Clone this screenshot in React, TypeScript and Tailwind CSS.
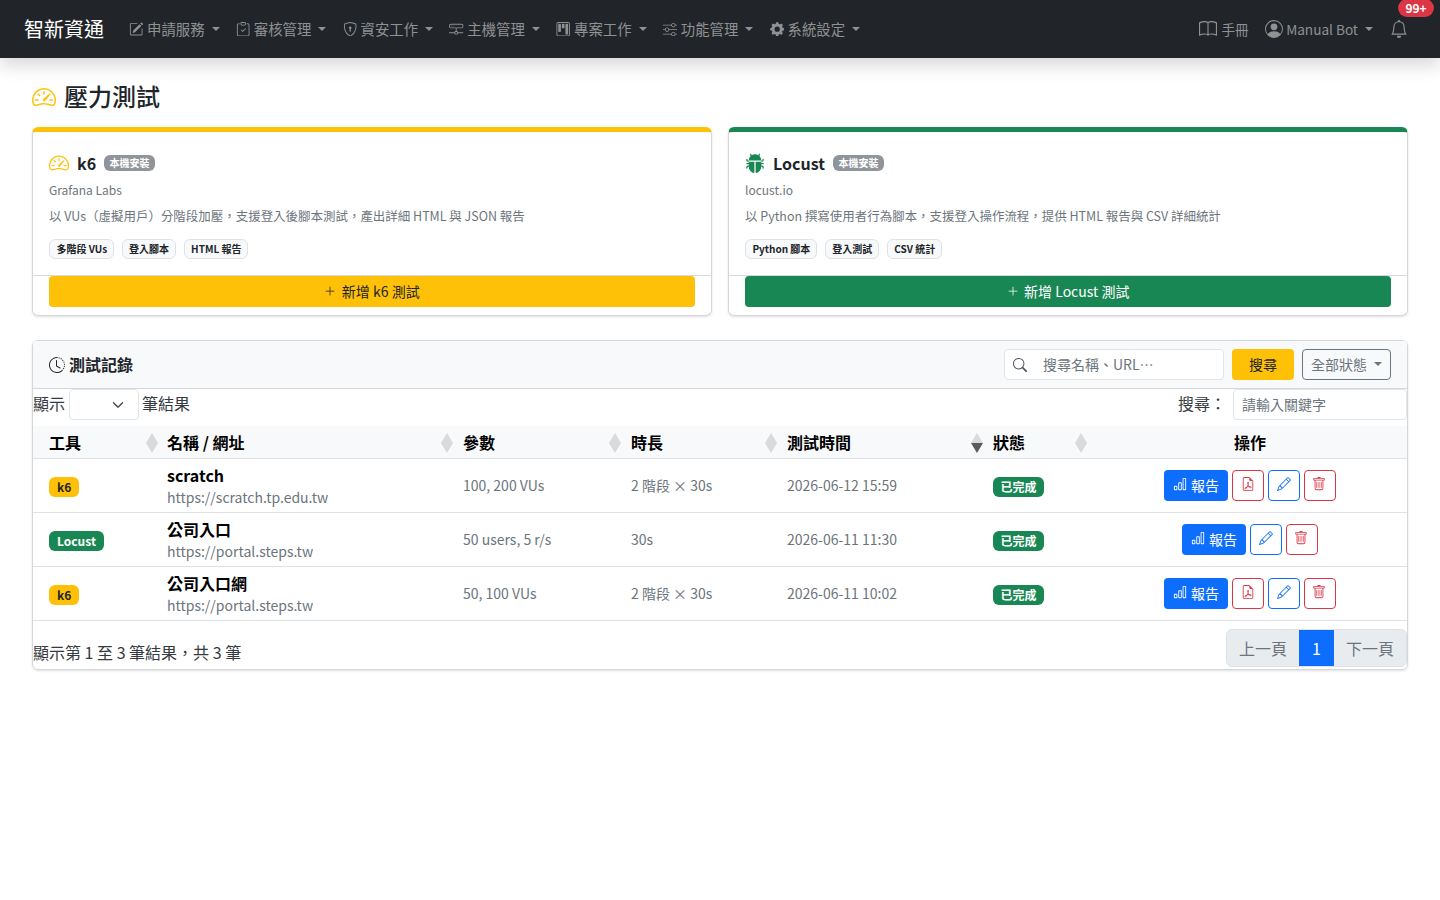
import type { ReactNode } from "react";
import {
  BsBarChart,
  BsBell,
  BsBook,
  BsBugFill,
  BsChevronDown,
  BsClipboardCheck,
  BsClockHistory,
  BsFileEarmarkPdf,
  BsGearFill,
  BsHddNetwork,
  BsKanban,
  BsPencil,
  BsPencilSquare,
  BsPersonCircle,
  BsPlusLg,
  BsSearch,
  BsShieldLock,
  BsSliders,
  BsSpeedometer2,
  BsTrash,
} from "react-icons/bs";

const navItems = [
  { label: "申請服務", icon: BsPencilSquare },
  { label: "審核管理", icon: BsClipboardCheck },
  { label: "資安工作", icon: BsShieldLock },
  { label: "主機管理", icon: BsHddNetwork },
  { label: "專案工作", icon: BsKanban },
  { label: "功能管理", icon: BsSliders },
  { label: "系統設定", icon: BsGearFill },
];

const rows = [
  { tool: "k6", name: "scratch", url: "https://scratch.tp.edu.tw", params: "100, 200 VUs", time: "2 階段 × 30s", date: "2026-06-12 15:59", pdf: true },
  { tool: "Locust", name: "公司入口", url: "https://portal.steps.tw", params: "50 users, 5 r/s", time: "30s", date: "2026-06-11 11:30", pdf: false },
  { tool: "k6", name: "公司入口網", url: "https://portal.steps.tw", params: "50, 100 VUs", time: "2 階段 × 30s", date: "2026-06-11 10:02", pdf: true },
];

function Caret() {
  return <span className="ml-[7px] inline-block h-0 w-0 border-x-[4px] border-t-[4px] border-x-transparent border-t-current" />;
}

function SortMark({ active, className = "right-[-6px]" }: { active?: boolean; className?: string }) {
  return (
    <svg viewBox="0 0 12 20" className={`absolute top-[7px] h-5 w-3 ${className}`}>
      <path d="M6 0 L12 10 H0 Z" fill="#dadada" />
      <path d="M0 10 H12 L6 20 Z" fill={active ? "#555b61" : "#dadada"} />
    </svg>
  );
}

function Tag({ children }: { children: ReactNode }) {
  return (
    <span className="rounded-md border border-[#dee2e6] bg-[#f8f9fa] py-[2px] pr-[5.6px] pl-[6.4px] text-[10px] leading-[14px] font-bold text-[#212529]">
      {children}
    </span>
  );
}

function ToolCard(props: {
  accent: string;
  icon: ReactNode;
  title: string;
  vendor: string;
  desc: string;
  tags: string[];
  button: string;
  buttonClass: string;
}) {
  return (
    <div className={`h-[189px] overflow-hidden rounded-md border border-[#d5d7d9] border-t-[5px] shadow-sm ${props.accent}`}>
      <div className="h-[143px] px-4 pt-[18px]">
        <div className="flex h-[26px] items-center">
          {props.icon}
          <span className="ml-2 text-base leading-[26px] font-semibold text-[#212529]">{props.title}</span>
          <span className="ml-2 rounded-md bg-[#8f959b] px-[5.5px] text-[10px] leading-[16px] font-bold text-white">本機安裝</span>
        </div>
        <p className="mt-[5px] text-xs leading-[18px] text-[#6c757d]">{props.vendor}</p>
        <p className="mt-[7px] text-[12.48px] leading-[20px] text-[#6c757d]">{props.desc}</p>
        <div className="mt-[13px] flex gap-2">
          {props.tags.map((t) => (
            <Tag key={t}>{t}</Tag>
          ))}
        </div>
      </div>
      <div className="border-t border-[#d9dadb] px-4">
        <button className={`flex h-[31px] w-full items-center justify-center gap-[5.5px] rounded pb-[2px] text-sm ${props.buttonClass}`}>
          <BsPlusLg className="h-3 w-3" />
          {props.button}
        </button>
      </div>
    </div>
  );
}

function IconButton({ tone, children }: { tone: "red" | "blue"; children: ReactNode }) {
  const cls = tone === "red" ? "border-[#dc3545] text-[#dc3545]" : "border-[#0d6efd] text-[#0d6efd]";
  return <button className={`flex h-[31px] w-[32px] items-center justify-center rounded border bg-white pb-[2px] text-sm ${cls}`}>{children}</button>;
}

export default function App() {
  return (
    <div lang="zh-Hant" className="min-h-[900px] bg-white text-[#212529] [font-family:'Noto_Sans_CJK_TC','Noto_Sans',sans-serif]">
      <nav className="flex h-[58px] items-center bg-[#212529] pl-6 pr-8 shadow-[0_8px_16px_rgba(0,0,0,0.15)]">
        <span className="mr-[17px] text-xl text-white">智新資通</span>
        <div className="flex text-[14.4px] text-[#8f9193]">
          {navItems.map((item) => {
            const Icon = item.icon;
            return (
              <div key={item.label} className="flex items-center pr-[8.2px] pl-2">
                <Icon className="mr-[3.6px] h-[14.4px] w-[14.4px]" />
                <span>{item.label}</span>
                <Caret />
              </div>
            );
          })}
        </div>
        <div className="ml-auto flex items-center text-[#8f9193]">
          <BsBook className="h-[18px] w-[18px]" />
          <span className="ml-1 text-[13.6px]">手冊</span>
          <BsPersonCircle className="ml-4 h-[18px] w-[18px]" />
          <span className="ml-[3.5px] text-[13.6px]">Manual Bot</span>
          <Caret />
          <div className="relative ml-[17px]">
            <BsBell className="h-[18px] w-[18px]" />
            <span className="absolute top-[-21px] left-[8px] w-9 rounded-full bg-[#dc3545] text-center text-xs leading-[18px] font-bold text-white">99+</span>
          </div>
        </div>
      </nav>

      <main className="px-8">
        <h1 className="flex h-[69px] items-center pt-[6px] text-2xl leading-9 font-medium">
          <BsSpeedometer2 className="mt-[2px] mr-2 h-6 w-6 text-[#ffc107]" />
          壓力測試
        </h1>

        <div className="grid grid-cols-2 gap-4">
          <ToolCard
            accent="border-t-[#ffc107]"
            icon={<BsSpeedometer2 className="h-5 w-5 text-[#ffc107]" />}
            title="k6"
            vendor="Grafana Labs"
            desc="以 VUs（虛擬用戶）分階段加壓，支援登入後腳本測試，產出詳細 HTML 與 JSON 報告"
            tags={["多階段 VUs", "登入腳本", "HTML 報告"]}
            button="新增 k6 測試"
            buttonClass="bg-[#ffc107] text-[#212529]"
          />
          <ToolCard
            accent="border-t-[#198754]"
            icon={<BsBugFill className="h-5 w-5 text-[#198754]" />}
            title="Locust"
            vendor="locust.io"
            desc="以 Python 撰寫使用者行為腳本，支援登入操作流程，提供 HTML 報告與 CSV 詳細統計"
            tags={["Python 腳本", "登入測試", "CSV 統計"]}
            button="新增 Locust 測試"
            buttonClass="bg-[#198754] text-white"
          />
        </div>

        <section className="mt-6 h-[330px] rounded-md border border-[#d5d7d9] shadow-sm">
          <div className="flex h-[48px] items-center border-b border-[#d5d7d9] bg-[#f8f9fa] px-4">
            <BsClockHistory className="mr-1 h-4 w-4" />
            <span className="pb-[2px] font-bold">測試記錄</span>
            <div className="ml-auto flex items-center gap-2">
              <div className="flex h-[31px] w-[220px] items-center rounded border border-[#e3e6e9] bg-white pl-2 text-sm text-[#6c757d]">
                <BsSearch className="h-[14px] w-[14px] text-[#495057]" />
                <span className="ml-4 pb-[2px]">搜尋名稱、URL…</span>
              </div>
              <button className="h-[31px] w-[62px] rounded bg-[#ffc107] pb-[2px] text-sm">搜尋</button>
              <button className="flex h-[31px] w-[89px] items-center justify-center rounded border border-[#6c757d] pb-[2px] text-sm text-[#6c757d]">
                全部狀態
                <Caret />
              </button>
            </div>
          </div>

          <div className="flex h-[31px] items-center text-[#343a40]">
            <span className="pb-[4px]">顯示</span>
            <div className="ml-1 flex h-[31px] w-[70px] items-center justify-end rounded border border-[#e3e6e9] pr-[14.5px]">
              <BsChevronDown className="h-3 w-3" strokeWidth={1} />
            </div>
            <span className="ml-[3px] pb-[4px]">筆結果</span>
            <span className="ml-auto pb-[4px]">搜尋：</span>
            <div className="ml-[7px] flex h-[31px] w-[174px] items-center rounded border border-[#e3e6e9] pb-[2px] pl-2 text-sm text-[#6c757d]">請輸入關鍵字</div>
          </div>

          <table className="mt-[6px] w-full table-fixed border-collapse">
            <colgroup>
              <col className="w-[118px]" />
              <col className="w-[296px]" />
              <col className="w-[168px]" />
              <col className="w-[156px]" />
              <col className="w-[206px]" />
              <col className="w-[116px]" />
              <col />
            </colgroup>
            <thead>
              <tr className="h-[32px] border-b border-[#dee2e6] bg-[#f8f9fa] text-left text-base font-bold text-[#000]">
                <th className="relative pl-4">工具<SortMark className="right-[-7px]" /></th>
                <th className="relative pl-4">名稱 / 網址<SortMark /></th>
                <th className="relative pl-4">參數<SortMark /></th>
                <th className="relative pl-4">時長<SortMark /></th>
                <th className="relative pl-4">測試時間<SortMark active /></th>
                <th className="relative pl-4">狀態<SortMark className="right-[6px]" /></th>
                <th className="text-center">操作</th>
              </tr>
            </thead>
            <tbody>
              {rows.map((r) => (
                <tr key={r.name} className="h-[54px] border-b border-[#dee2e6] text-sm text-[#6c757d]">
                  <td className="pt-[2px] pl-4">
                    {r.tool === "k6" ? (
                      <span className="inline-block rounded-md bg-[#ffc107] px-2 text-xs leading-5 font-bold text-[#212529]">k6</span>
                    ) : (
                      <span className="inline-block rounded-md bg-[#198754] px-2 text-xs leading-5 font-bold text-white">Locust</span>
                    )}
                  </td>
                  <td className="pt-[2px] pl-4">
                    <div className="text-base leading-[22px] font-semibold text-[#000]">{r.name}</div>
                    <div className="leading-[22px]">{r.url}</div>
                  </td>
                  <td className="pl-4">{r.params}</td>
                  <td className="pl-4">{r.time}</td>
                  <td className="pl-4">{r.date}</td>
                  <td className="pt-[2px] pl-4">
                    <span className="inline-block rounded-md bg-[#198754] px-[7.5px] text-xs leading-5 font-bold text-white">已完成</span>
                  </td>
                  <td>
                    <div className="flex justify-center gap-1">
                      <button className="flex h-[31px] w-[64px] items-center justify-center gap-1 rounded bg-[#0d6efd] text-sm text-white">
                        <BsBarChart className="mb-[2px] h-[14px] w-[14px]" />
                        報告
                      </button>
                      {r.pdf && (
                        <IconButton tone="red">
                          <BsFileEarmarkPdf />
                        </IconButton>
                      )}
                      <IconButton tone="blue">
                        <BsPencil />
                      </IconButton>
                      <IconButton tone="red">
                        <BsTrash className="mr-[2px]" />
                      </IconButton>
                    </div>
                  </td>
                </tr>
              ))}
            </tbody>
          </table>

          <div className="mt-2 flex items-center justify-between text-[#343a40]">
            <span className="mt-2">顯示第 1 至 3 筆結果，共 3 筆</span>
            <div className="flex h-[38px] overflow-hidden rounded-md border border-[#dee2e6] bg-[#e9ecef] text-[#6c757d]">
              <span className="flex w-[72px] items-center justify-center">上一頁</span>
              <span className="flex w-[35px] items-center justify-center bg-[#0d6efd] text-white">1</span>
              <span className="flex w-[72px] items-center justify-center">下一頁</span>
            </div>
          </div>
        </section>
      </main>
    </div>
  );
}
